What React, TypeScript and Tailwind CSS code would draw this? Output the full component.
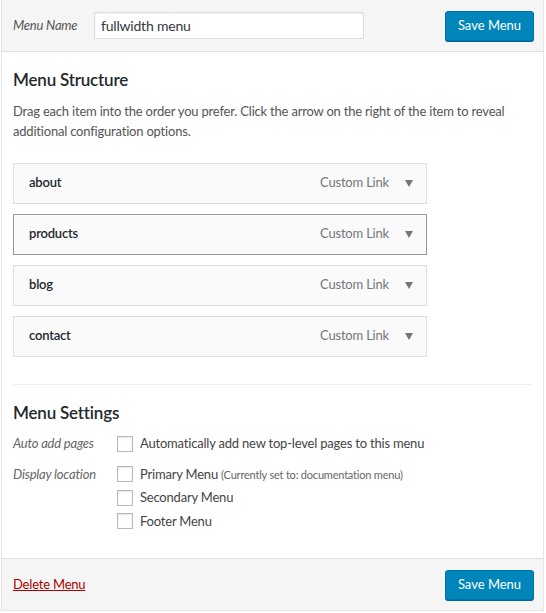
import React from 'react'

const font = "font-['Lato','Open_Sans',sans-serif] tracking-[-0.2px]"

const menuItems = ['about', 'products', 'blog', 'contact']

const Checkbox = () => (
  <span className="inline-block h-4 w-4 shrink-0 border border-[#b4b9be] bg-white shadow-[inset_0_1px_2px_rgba(0,0,0,0.1)]" />
)

const SaveButton = () => (
  <button className="h-[30px] w-[89px] rounded-[3px] border border-[#0073aa] bg-[#0085ba] text-[13px] tracking-normal text-white shadow-[0_1px_0_#006799]">
    Save Menu
  </button>
)

const MenuItem = ({ title, active }: { title: string; active?: boolean }) => (
  <div
    className={`flex h-[41px] w-[414px] items-center border bg-[#fafafa] pl-[15px] pr-[13px] ${
      active ? 'border-[#999]' : 'border-[#dfdfdf]'
    }`}
  >
    <span className="flex-1 text-[13px] font-semibold text-[#23282d]">{title}</span>
    <span className="text-[13px] text-[#72777c]">Custom Link</span>
    <svg className="ml-[16px]" width="8" height="7" viewBox="0 0 8 7">
      <path d="M0 0h8L4 7z" fill="#72777c" />
    </svg>
  </div>
)

export default function App() {
  return (
    <div className={`${font} h-[613px] w-[546px] bg-white pl-[1px]`}>
      <div className="flex h-[611px] w-[543px] flex-col border border-t-0 border-[#e5e5e5]">
        {/* header */}
        <div className="flex h-[52px] items-center border-b border-[#dfdfdf] bg-[#f5f5f5] pl-[11px] pr-[9px]">
          <span className="w-[81px] text-[13px] italic text-[#555]">Menu Name</span>
          <input
            readOnly
            value="fullwidth menu"
            className="h-[27px] w-[270px] border border-[#ddd] bg-white px-[6px] text-[14px] text-[#32373c] shadow-[inset_0_1px_2px_rgba(0,0,0,0.07)] outline-none"
          />
          <div className="flex-1" />
          <SaveButton />
        </div>

        {/* body */}
        <div className="flex-1 px-[11px] pt-[15px]">
          <h3 className="text-[17px] font-semibold text-[#23282d]">Menu Structure</h3>
          <p className="mt-[8px] text-[13px] leading-[20px] text-[#555]">
            Drag each item into the order you prefer. Click the arrow on the right of the item to reveal
            additional configuration options.
          </p>
          <div className="mt-[22px] flex flex-col gap-[10px]">
            {menuItems.map((m) => (
              <MenuItem key={m} title={m} active={m === 'products'} />
            ))}
          </div>

          <div className="mt-[27px] mb-[15px] border-t border-[#eee]" />

          <h3 className="text-[17px] font-semibold text-[#23282d]">Menu Settings</h3>
          <div className="mt-[9px] flex items-center text-[13px] text-[#555]">
            <span className="w-[104px] italic text-[#666]">Auto add pages</span>
            <Checkbox />
            <span className="ml-[7px] text-[#444]">Automatically add new top-level pages to this menu</span>
          </div>
          <div className="mt-[11px] flex text-[13px]">
            <span className="w-[104px] italic leading-[18px] text-[#666]">Display location</span>
            <div className="flex flex-col gap-[4px] text-[#444]">
              <div className="flex items-center">
                <Checkbox />
                <span className="ml-[7px]">
                  Primary Menu <span className="text-[11px] text-[#666]">(Currently set to: documentation menu)</span>
                </span>
              </div>
              <div className="flex items-center">
                <Checkbox />
                <span className="ml-[7px]">Secondary Menu</span>
              </div>
              <div className="flex items-center">
                <Checkbox />
                <span className="ml-[7px]">Footer Menu</span>
              </div>
            </div>
          </div>
        </div>

        {/* footer */}
        <div className="flex h-[52px] items-center border-t border-[#dfdfdf] bg-[#f5f5f5] pl-[11px] pr-[9px]">
          <a className="text-[13px] text-[#a00] underline">Delete Menu</a>
          <div className="flex-1" />
          <SaveButton />
        </div>
      </div>
    </div>
  )
}
